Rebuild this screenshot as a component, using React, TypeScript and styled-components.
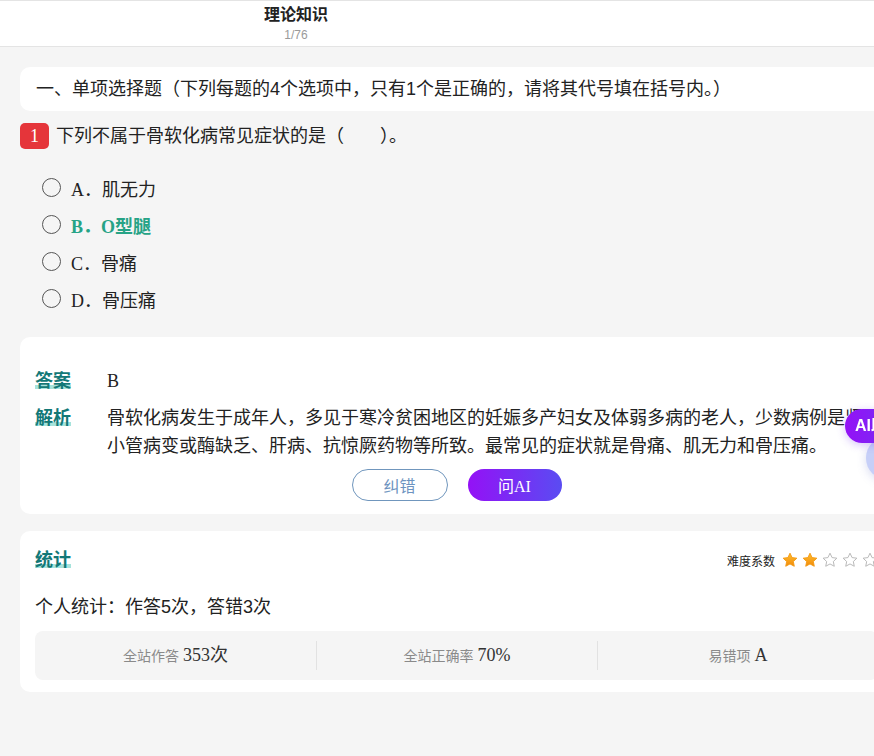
import React from "react";
import styled, { createGlobalStyle } from "styled-components";

const SERIF = `"Liberation Serif", "Noto Sans CJK SC", serif`;
const SANS = `"Liberation Sans", "Noto Sans CJK SC", sans-serif`;

const GlobalStyle = createGlobalStyle`
  html, body {
    margin: 0;
    padding: 0;
    background: #f5f5f5;
    overflow: hidden;
  }
  body {
    font-family: ${SERIF};
    color: #222;
  }
`;

// Page shell, wider than the window: the right side runs off the screen
const Page = styled.div`
  width: 913px;
  min-height: 756px;
`;

// Top bar with the title and the progress counter
const Header = styled.header`
  background: #fff;
  border-top: 1px solid #e4e4e4;
  border-bottom: 1px solid #e4e4e4;
  padding: 2px 0;
`;

const TitleBox = styled.div`
  width: 592px;
  text-align: center;
`;

const Title = styled.div`
  font-family: ${SANS};
  font-size: 16px;
  font-weight: 700;
  line-height: 24px;
  color: #222;
`;

const Progress = styled.div`
  font-family: ${SANS};
  font-size: 12px;
  line-height: 17px;
  color: #9a9a9a;
`;

const Main = styled.main`
  padding: 20px 20px 0;
`;

interface CardProps {
  $gap?: number;
}
const Card = styled.section<CardProps>`
  background: #fff;
  border-radius: 10px;
  margin-top: ${(p) => p.$gap ?? 0}px;
`;

const SectionCard = styled(Card)`
  padding: 0 16px;
  font-family: ${SANS};
  font-size: 18px;
  line-height: 44px;
  color: #222;
`;

const QuestionRow = styled.div`
  display: flex;
  align-items: center;
  gap: 7px;
  margin-top: 12px;
`;

const NumBadge = styled.span`
  display: inline-flex;
  align-items: center;
  justify-content: center;
  width: 29px;
  height: 26px;
  border-radius: 5px;
  background: #e5353a;
  color: #fff;
  font-family: ${SERIF};
  font-size: 18px;
`;

const QuestionText = styled.div`
  font-family: ${SANS};
  font-size: 18px;
  line-height: 26px;
  color: #222;
`;

const OptionList = styled.ul`
  list-style: none;
  margin: 20px 0 0;
  padding: 0 0 0 22px;
`;

interface OptionProps {
  $correct?: boolean;
}
const OptionRow = styled.li<OptionProps>`
  display: flex;
  align-items: center;
  gap: 10px;
  height: 37px;
  font-family: ${SERIF};
  font-size: 18px;
  color: ${(p) => (p.$correct ? "#26a386" : "#222")};
  font-weight: ${(p) => (p.$correct ? 700 : 400)};
`;

const Radio = styled.span`
  width: 17px;
  height: 17px;
  border: 1.6px solid #555;
  border-radius: 50%;
  flex: none;
`;

const AnswerCard = styled(Card)`
  padding: 30px 15px 13px;
`;

interface LineProps {
  $gap?: number;
}
const InfoRow = styled.div<LineProps>`
  display: flex;
  margin-top: ${(p) => p.$gap ?? 0}px;
`;

const Label = styled.span`
  flex: none;
  width: 72px;
  font-family: ${SANS};
  font-size: 18px;
  font-weight: 700;
  line-height: 28px;
  color: #137877;
  span {
    background: linear-gradient(transparent 68%, #a6e3dc 68%, #a6e3dc 88%, transparent 88%);
  }
`;

const InfoText = styled.div`
  flex: 1;
  font-family: ${SERIF};
  font-size: 18px;
  line-height: 28px;
  color: #222;
`;

const ButtonRow = styled.div`
  display: flex;
  justify-content: center;
  gap: 20px;
  margin-top: 9px;
`;

interface ButtonProps {
  $primary?: boolean;
}
const PillButton = styled.button<ButtonProps>`
  width: ${(p) => (p.$primary ? 94 : 96)}px;
  height: 32px;
  border-radius: 16px;
  font-family: ${SERIF};
  font-size: 16px;
  cursor: pointer;
  border: ${(p) => (p.$primary ? "none" : "1px solid #7096bd")};
  color: ${(p) => (p.$primary ? "#fff" : "#6d93c0")};
  background: ${(p) =>
    p.$primary ? "linear-gradient(90deg, #9411f6 0%, #5a4cf2 100%)" : "#fff"};
`;

const StatsCard = styled(Card)`
  padding: 16px 15px 12px;
`;

const StatsHead = styled.div`
  display: flex;
  justify-content: space-between;
  align-items: center;
  height: 26px;
`;

const Difficulty = styled.div`
  display: flex;
  align-items: center;
  gap: 4px;
  font-family: ${SANS};
  font-size: 12px;
  color: #222;
  span {
    margin-right: 3px;
  }
`;

const Personal = styled.div`
  margin-top: 20px;
  font-family: ${SANS};
  font-size: 18px;
  line-height: 28px;
  color: #222;
`;

const SiteStats = styled.div`
  display: grid;
  grid-template-columns: repeat(3, 1fr);
  align-items: center;
  height: 49px;
  margin-top: 10px;
  background: #f5f5f5;
  border-radius: 8px;
`;

interface CellProps {
  $divider?: boolean;
}
const StatCell = styled.div<CellProps>`
  text-align: center;
  border-left: ${(p) => (p.$divider ? "1px solid #e2e2e2" : "none")};
  line-height: 28px;
  font-family: ${SANS};
  font-size: 14px;
  color: #8a8a8a;
  b {
    font-family: ${SERIF};
    font-weight: 400;
    font-size: 18px;
    color: #333;
    margin-left: 4px;
  }
`;

// Floating AI helper, lying over the right edge of the page
const FloatAI = styled.div`
  position: fixed;
  left: 845px;
  top: 409px;
  height: 34px;
  padding: 0 12px 0 10px;
  border-radius: 17px;
  background: linear-gradient(90deg, #9411f6, #6a3af2);
  color: #fff;
  font-family: ${SANS};
  font-size: 16px;
  font-weight: 700;
  line-height: 34px;
  white-space: nowrap;
  z-index: 3;
  box-shadow: 0 2px 8px rgba(120, 60, 240, 0.3);
`;

const FloatBall = styled.div`
  position: fixed;
  left: 866px;
  top: 436px;
  width: 44px;
  height: 44px;
  border-radius: 50%;
  background: #c6cff8;
  box-shadow: 0 2px 10px rgba(100, 110, 200, 0.25);
  z-index: 2;
`;

const Star = ({ filled }: { filled: boolean }) => (
  <svg width="16" height="16" viewBox="0 0 24 24">
    <defs>
      <linearGradient id="starGold" x1="0" y1="0" x2="0" y2="1">
        <stop offset="0" stopColor="#ffbf2e" />
        <stop offset="1" stopColor="#f28a0a" />
      </linearGradient>
    </defs>
    <path
      d="M12 1.8l3.1 6.6 7.2.9-5.3 5 1.4 7.1L12 17.9l-6.4 3.5 1.4-7.1-5.3-5 7.2-.9z"
      fill={filled ? "url(#starGold)" : "none"}
      stroke={filled ? "#f29a16" : "#b5b5b5"}
      strokeWidth="1.4"
      strokeLinejoin="round"
    />
  </svg>
);

const options = [
  { key: "A", text: "肌无力" },
  { key: "B", text: "O型腿", correct: true },
  { key: "C", text: "骨痛" },
  { key: "D", text: "骨压痛" },
];

export default function App() {
  return (
    <>
      <GlobalStyle />
      <Page>
        <Header>
          <TitleBox>
            <Title>理论知识</Title>
            <Progress>1/76</Progress>
          </TitleBox>
        </Header>
        <Main>
          <SectionCard>
            一、单项选择题（下列每题的4个选项中，只有1个是正确的，请将其代号填在括号内。）
          </SectionCard>

          <QuestionRow>
            <NumBadge>1</NumBadge>
            <QuestionText>下列不属于骨软化病常见症状的是（　　）。</QuestionText>
          </QuestionRow>

          <OptionList>
            {options.map((o) => (
              <OptionRow key={o.key} $correct={o.correct}>
                <Radio />
                {o.key}．{o.text}
              </OptionRow>
            ))}
          </OptionList>

          <AnswerCard $gap={20}>
            <InfoRow>
              <Label>
                <span>答案</span>
              </Label>
              <InfoText>B</InfoText>
            </InfoRow>
            <InfoRow $gap={9}>
              <Label>
                <span>解析</span>
              </Label>
              <InfoText>
                骨软化病发生于成年人，多见于寒冷贫困地区的妊娠多产妇女及体弱多病的老人，少数病例是肾小管病变或酶缺乏、肝病、抗惊厥药物等所致。最常见的症状就是骨痛、肌无力和骨压痛。
              </InfoText>
            </InfoRow>
            <ButtonRow>
              <PillButton>纠错</PillButton>
              <PillButton $primary>问AI</PillButton>
            </ButtonRow>
          </AnswerCard>

          <StatsCard $gap={17}>
            <StatsHead>
              <Label>
                <span>统计</span>
              </Label>
              <Difficulty>
                <span>难度系数</span>
                {[0, 1, 2, 3, 4].map((i) => (
                  <Star key={i} filled={i < 2} />
                ))}
              </Difficulty>
            </StatsHead>
            <Personal>个人统计：作答5次，答错3次</Personal>
            <SiteStats>
              <StatCell>
                全站作答<b>353次</b>
              </StatCell>
              <StatCell $divider>
                全站正确率<b>70%</b>
              </StatCell>
              <StatCell $divider>
                易错项<b>A</b>
              </StatCell>
            </SiteStats>
          </StatsCard>
        </Main>
      </Page>
      <FloatBall />
      <FloatAI>AI助手</FloatAI>
    </>
  );
}
